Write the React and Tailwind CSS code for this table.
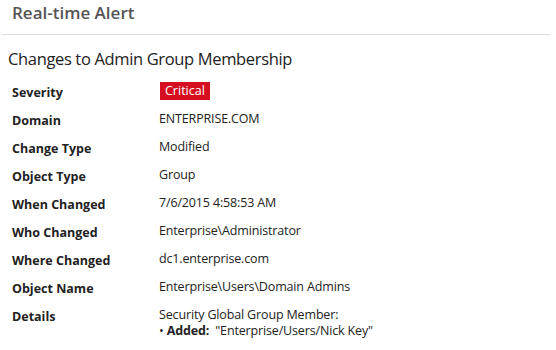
const rows = [
  { label: "Domain", value: "ENTERPRISE.COM" },
  { label: "Change Type", value: "Modified" },
  { label: "Object Type", value: "Group" },
  { label: "When Changed", value: "7/6/2015 4:58:53 AM" },
  { label: "Who Changed", value: "Enterprise\\Administrator" },
  { label: "Where Changed", value: "dc1.enterprise.com" },
  { label: "Object Name", value: "Enterprise\\Users\\Domain Admins" },
];

export default function App() {
  return (
    <div className="w-[556px] h-[350px] bg-white text-[#222] font-['Open_Sans','Noto_Sans',sans-serif] overflow-hidden">
      {/* Header */}
      <div className="ml-[2px] w-[548px] h-[35px] border-b border-[#dcdcdc] pl-[10px] pt-[1px]">
        <h1 className="text-[17px] leading-[24px] font-semibold text-[#555]">Real-time Alert</h1>
      </div>

      <h2 className="pl-[8px] mt-[12px] text-[16.5px] leading-[24px] text-[#222] tracking-[-0.35px]">
        Changes to Admin Group Membership
      </h2>

      <div className="mt-[7px] pl-[12px] text-[12.5px]">
        <div className="grid grid-cols-[147px_1fr] h-[28px]">
          <div className="pt-[2px] leading-[26px] font-bold">Severity</div>
          <div className="flex items-start pt-[4px] pl-[1px]">
            <span className="bg-[#d50e20] text-white leading-[18px] px-[5px]">Critical</span>
          </div>
        </div>
        {rows.map((r) => (
          <div key={r.label} className="grid grid-cols-[147px_1fr] h-[28px]">
            <div className="pt-[2px] leading-[26px] font-bold">{r.label}</div>
            <div className="leading-[26px] tracking-[-0.15px]">{r.value}</div>
          </div>
        ))}
        <div className="grid grid-cols-[147px_1fr]">
          <div className="pt-[2px] leading-[26px] font-bold">Details</div>
          <div className="pt-[5px] leading-[16px] tracking-[-0.15px]">
            <div>Security Global Group Member:</div>
            <div>
              <span>• </span>
              <span className="font-bold">Added:</span>
              <span>&nbsp; "Enterprise/Users/Nick Key"</span>
            </div>
          </div>
        </div>
      </div>
    </div>
  );
}
